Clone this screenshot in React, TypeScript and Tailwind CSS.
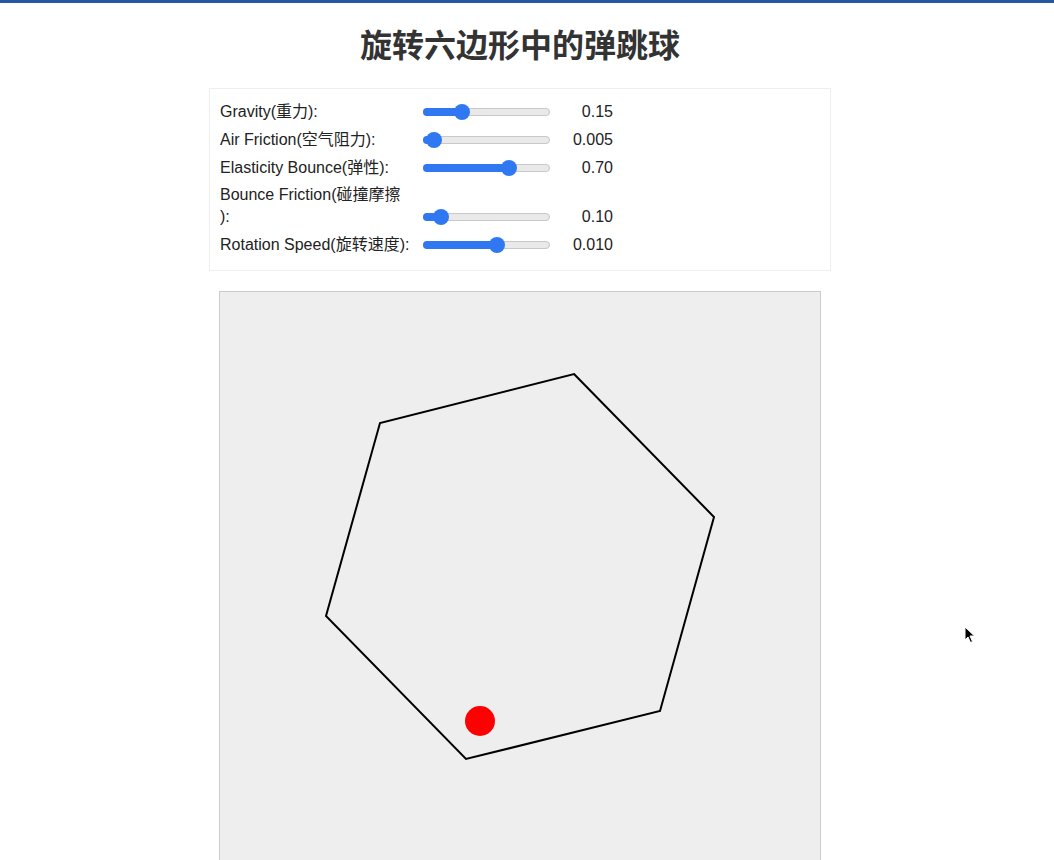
import React from "react";

const rows = [
  { label: ["Gravity(重力):"], pos: 39, value: "0.15", mb: "mb-[6px]" },
  { label: ["Air Friction(空气阻力):"], pos: 11, value: "0.005", mb: "mb-[6px]" },
  { label: ["Elasticity Bounce(弹性):"], pos: 86, value: "0.70", mb: "mb-[5px]" },
  { label: ["Bounce Friction(碰撞摩擦", "):"], pos: 18, value: "0.10", mb: "mb-[6px]" },
  { label: ["Rotation Speed(旋转速度):"], pos: 74, value: "0.010", mb: "mb-[6px]" },
];

function Slider({ pos }: { pos: number }) {
  return (
    <div className="relative ml-[3px] mr-[2px] h-[22px] w-[127px] shrink-0">
      <div className="absolute left-0 right-0 top-[7px] h-[8px] rounded-full border border-[#c8c8c8] bg-[#e9e9e9]" />
      <div
        className="absolute left-0 top-[7px] h-[8px] rounded-full bg-[#2f78f2]"
        style={{ width: pos + 4 }}
      />
      <div
        className="absolute top-[3px] h-[16px] w-[16px] rounded-full bg-[#2f78f2]"
        style={{ left: pos - 8 }}
      />
    </div>
  );
}

export default function App() {
  return (
    <div
      className="relative min-h-[860px] w-[1054px] overflow-hidden bg-white text-[#222]"
      style={{ fontFamily: '"Liberation Sans", "Noto Sans CJK SC", sans-serif' }}
    >
      <div className="h-[3px] w-full bg-[#2458a0]" />
      <div className="flex w-[1040px] flex-col items-center">
        <h1 className="mt-[24px] text-[32px] font-bold leading-[38px] text-[#333]">
          旋转六边形中的弹跳球
        </h1>
        <div className="mt-[23px] w-[622px] border border-[#eeeeee] px-[10px] pt-[12px] pb-[8px] text-[16px] leading-[22px]">
          {rows.map((r, i) => (
            <div key={i} className={`${r.mb} flex items-end`}>
              <div className="w-[200px] shrink-0">
                {r.label.map((l, j) => (
                  <div key={j}>{l}</div>
                ))}
              </div>
              <Slider pos={r.pos} />
              <div className="ml-[10px] w-[51px] text-right">{r.value}</div>
            </div>
          ))}
        </div>
        <div className="mt-[20px] h-[600px] w-[602px] shrink-0 border border-[#cccccc] bg-[#eeeeee]">
          <svg width="600" height="600" viewBox="0 0 600 600">
            <polygon
              points="354,82 494,225 440,419 246,467 106,324 160,131"
              fill="none"
              stroke="#000"
              strokeWidth="2"
            />
            <circle cx="260" cy="429" r="15" fill="#ff0000" />
          </svg>
        </div>
      </div>
      <svg
        className="absolute left-[964px] top-[626px]"
        width="12"
        height="18"
        viewBox="0 0 12 18"
      >
        <path
          d="M1 1 L1 14 L4 11 L6.5 16.5 L8.5 15.5 L6 10 L10.5 10 Z"
          fill="#000"
          stroke="#fff"
          strokeWidth="1"
        />
      </svg>
    </div>
  );
}
